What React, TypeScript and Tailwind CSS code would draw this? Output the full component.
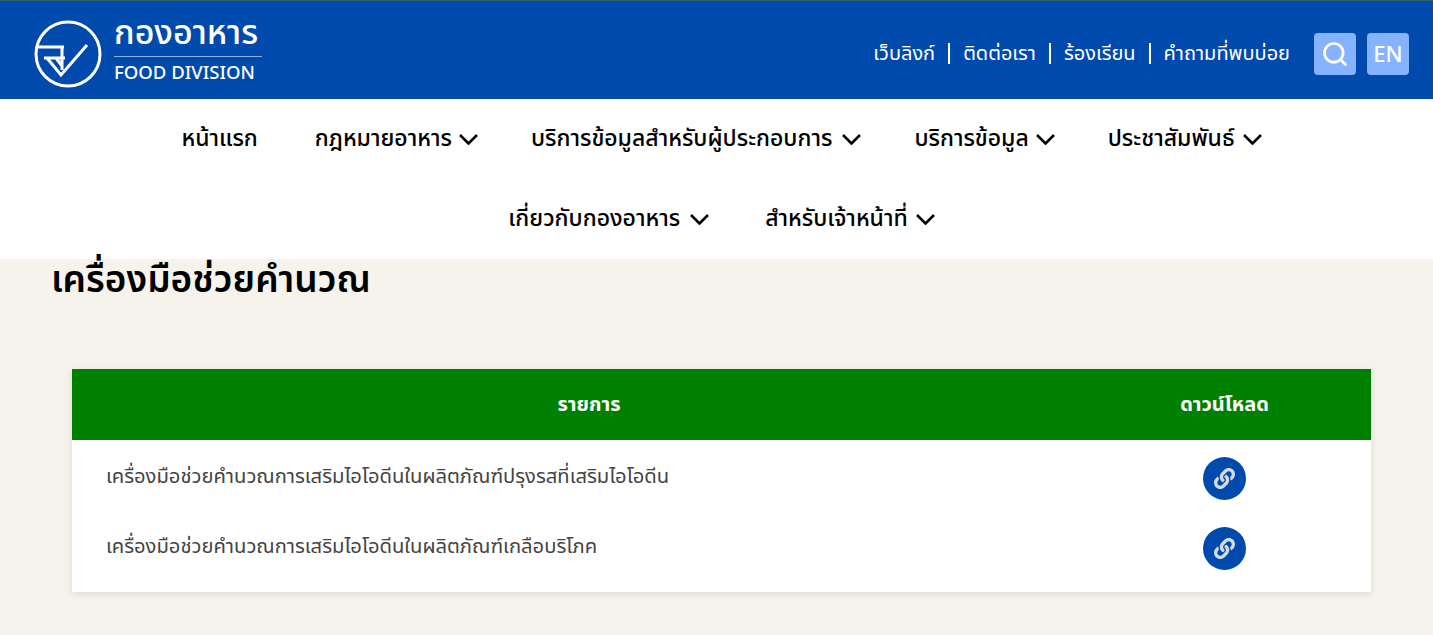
import { FaLink } from 'react-icons/fa'
import { Search } from 'lucide-react'

const font = "font-['Noto_Sans_Thai','Noto_Sans','Open_Sans','DejaVu_Sans',sans-serif]"

const topLinks = ['เว็บลิงก์', 'ติดต่อเรา', 'ร้องเรียน', 'คำถามที่พบบ่อย']

const navRows = [
  [
    { label: 'หน้าแรก', gap: 'mr-1' },
    { label: 'กฎหมายอาหาร', caret: true, gap: 'gap-[7px]' },
    { label: 'บริการข้อมูลสำหรับผู้ประกอบการ', caret: true, gap: 'gap-2.5' },
    { label: 'บริการข้อมูล', caret: true, gap: 'gap-[7px]' },
    { label: 'ประชาสัมพันธ์', caret: true, gap: 'gap-2' },
  ],
  [
    { label: 'เกี่ยวกับกองอาหาร', caret: true, gap: 'gap-2.5' },
    { label: 'สำหรับเจ้าหน้าที่', caret: true, gap: 'gap-2' },
  ],
]

const rows = [
  'เครื่องมือช่วยคำนวณการเสริมไอโอดีนในผลิตภัณฑ์ปรุงรสที่เสริมไอโอดีน',
  'เครื่องมือช่วยคำนวณการเสริมไอโอดีนในผลิตภัณฑ์เกลือบริโภค',
]

function Logo() {
  return (
    <svg width="68" height="68" viewBox="0 0 68 68" fill="none" stroke="white" strokeWidth="3" className="shrink-0">
      <circle cx="34" cy="34" r="32" />
      <path d="M3 27 H30 M28 27 V50 M10 38 H31 M13 38 L27 55 L53 25 M22 38 L28 46" />
    </svg>
  )
}

function Caret() {
  return (
    <svg width="19" height="11" viewBox="0 0 19 11" fill="none" stroke="currentColor" strokeWidth="2.6" className="shrink-0">
      <path d="M1 1 L9.5 9.5 L18 1" />
    </svg>
  )
}

export default function App() {
  return (
    <div className={`${font} min-h-[635px] bg-[#f6f3ed]`}>
      <header className="h-[99px] bg-[#004aad] border-t border-[#2f6468] flex items-center justify-between pt-[7px] pl-[34px] pr-6 text-white">
        <div className="flex items-center gap-3">
          <Logo />
          <div className="w-[148px] -mt-1">
            <div className="text-[34px] leading-[40px] font-medium border-b border-[#8fb0dc] pb-[2px]">กองอาหาร</div>
            <div className="text-[18.5px] leading-[32px] font-medium">FOOD DIVISION</div>
          </div>
        </div>
        <div className="flex items-center">
          <div className="flex items-center text-[20px]">
            {topLinks.map((link, i) => (
              <div key={link} className="flex items-center">
                {i > 0 && <span className="mx-[13px] w-0.5 h-[21px] bg-white" />}
                <span>{link}</span>
              </div>
            ))}
          </div>
          <button className="ml-6 w-[42px] h-[42px] rounded bg-[#86b3ff] flex items-center justify-center">
            <Search size={28} strokeWidth={2.3} />
          </button>
          <button className="ml-[11px] w-[42px] h-[42px] pt-[3px] rounded bg-[#86b3ff] flex items-center justify-center text-[22px] font-medium">
            EN
          </button>
        </div>
      </header>

      <nav className="bg-white h-40 text-black text-[23px] font-medium">
        {navRows.map((row, i) => (
          <div key={i} className={`h-20 pl-[10px] flex items-center justify-center ${i === 0 ? 'gap-[53px]' : 'gap-14'}`}>
            {row.map((item) => (
              <div key={item.label} className={`flex items-center ${item.gap}`}>
                <span>{item.label}</span>
                {item.caret && <Caret />}
              </div>
            ))}
          </div>
        ))}
      </nav>

      <main className="pl-[51px] pr-[62px]">
        <h1 className="text-[37px] leading-[44px] font-semibold text-black">เครื่องมือช่วยคำนวณ</h1>
        <div className="mt-[66px] ml-[21px] bg-white shadow-[0_2px_8px_rgba(0,0,0,0.1)] pb-3">
          <div className="h-[71px] bg-[#008000] flex items-center text-white text-[20px] font-bold">
            <div className="flex-1 text-center pl-[38px] pr-[10px]">รายการ</div>
            <div className="w-[293px] text-center">ดาวน์โหลด</div>
          </div>
          {rows.map((row) => (
            <div key={row} className="h-[70px] flex items-center text-[#444] text-[20.2px]">
              <div className="flex-1 pl-[34px] pt-1">{row}</div>
              <div className="w-[293px] flex justify-center mt-[6px]">
                <span className="w-[43px] h-[43px] rounded-full bg-[#004aad] flex items-center justify-center text-[#d5dae0]">
                  <FaLink size={21} />
                </span>
              </div>
            </div>
          ))}
        </div>
      </main>
    </div>
  )
}
